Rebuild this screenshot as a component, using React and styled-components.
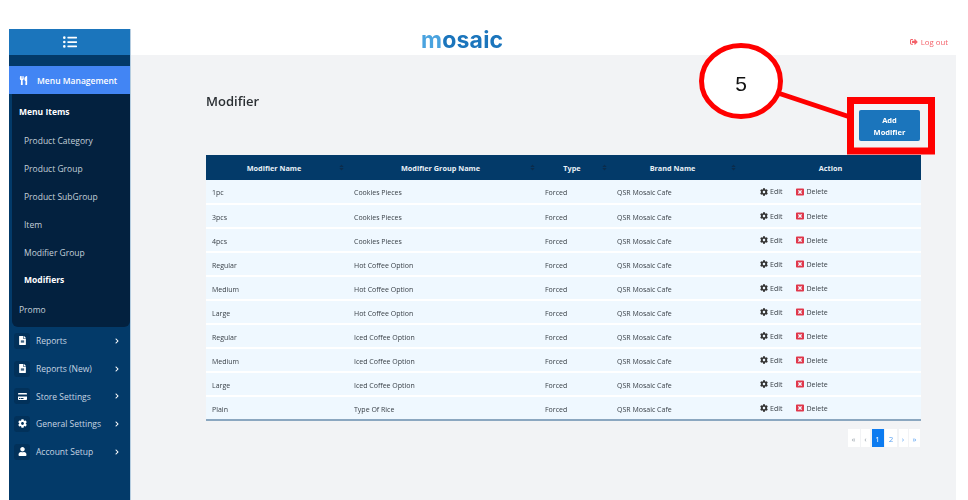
import styled, { createGlobalStyle } from "styled-components";
import {
  FaListUl, FaUtensils, FaFileAlt, FaCreditCard, FaCog, FaUser,
  FaChevronRight, FaSignOutAlt, FaSort, FaWindowClose,
} from "react-icons/fa";

const GlobalStyle = createGlobalStyle`
  html, body { margin: 0; background: #fff; }
  body { font-family: "Open Sans", "Noto Sans", sans-serif; }
`;

const Shell = styled.div`
  position: relative;
  display: flex;
  height: 500px;
  width: 968px;
  padding: 29px 12px 0 9px;
  box-sizing: border-box;
  overflow: hidden;
  filter: blur(0.5px);
`;

const Sidebar = styled.aside`
  width: 122px;
  flex: none;
  background: #033a69;
  border-right: 1px solid #b6cde0;
  box-sizing: border-box;
  color: #fff;
`;

const Toggle = styled.div`
  height: 26px;
  background: #1b75bc;
  display: flex;
  align-items: center;
  justify-content: center;
  font-size: 14px;
`;

const ActiveItem = styled.div`
  margin-top: 11px;
  height: 28px;
  background: #4285f4;
  display: flex;
  align-items: center;
  gap: 9px;
  padding-left: 10px;
  font-size: 8.5px;
  font-weight: 600;
  svg { font-size: 9px; }
`;

const SubMenu = styled.div`
  background: #03213f;
  margin-left: 3px;
  border-radius: 0 0 6px 6px;
  padding-top: 1px;
  height: 233px;
  box-sizing: border-box;
`;

const SubItem = styled.div`
  height: ${(p) => p.$h || 27.8}px;
  display: flex;
  align-items: center;
  padding-left: ${(p) => (p.$top ? 7 : 12)}px;
  font-size: 8.5px;
  font-weight: ${(p) => (p.$bold ? 700 : 400)};
  color: ${(p) => (p.$bold ? "#fff" : "#c3d0da")};
`;

const NavItem = styled.div`
  height: 27.7px;
  display: flex;
  align-items: center;
  padding-left: 5px;
  font-size: 8.5px;
  color: #c6d5e2;
`;

const NavIcon = styled.span`
  width: 16px;
  height: 16px;
  background: #02315a;
  border-radius: 3px;
  display: flex;
  align-items: center;
  justify-content: center;
  color: #fff;
  font-size: 9px;
  margin-right: 6px;
`;

const NavLabel = styled.span`
  width: 78px;
  white-space: nowrap;
`;

const Chevron = styled(FaChevronRight)`
  font-size: 6px;
  color: #fff;
`;

const Main = styled.main`
  flex: 1;
  display: flex;
  flex-direction: column;
  min-width: 0;
`;

const Header = styled.header`
  height: 26px;
  flex: none;
  background: #fff;
  display: flex;
  align-items: center;
  justify-content: space-between;
  padding: 0 8px 0 290px;
`;

const Logo = styled.div`
  font-family: "Inter", "Liberation Sans", sans-serif;
  font-weight: 700;
  font-size: 23px;
  letter-spacing: 0.2px;
  line-height: 26px;
  margin-top: -4px;
  color: #1b75bc;
  span { color: #4aa3df; }
`;

const Logout = styled.a`
  display: flex;
  align-items: center;
  gap: 3px;
  font-size: 7.8px;
  color: #f4626a;
`;

const Content = styled.section`
  flex: 1;
  background: #f2f3f5;
  padding: 0 35px 0 75px;
`;

const TitleRow = styled.div`
  display: flex;
  justify-content: space-between;
  align-items: flex-start;
  height: 100px;
`;

const Title = styled.h1`
  margin: 36px 0 0;
  font-size: 13px;
  line-height: 20px;
  font-weight: 600;
  color: #2b2f33;
`;

const AddButton = styled.button`
  margin: 55px 1px 0 0;
  width: 61px;
  height: 31px;
  border: 0;
  border-radius: 2px;
  background: #1b75bc;
  color: #fff;
  font-family: inherit;
  font-size: 7.5px;
  font-weight: 700;
  line-height: 12px;
  padding: 0 12px;
`;

const Table = styled.table`
  width: 715px;
  table-layout: fixed;
  border-collapse: collapse;
  font-size: 7px;
`;

const HeadCell = styled.th`
  position: relative;
  box-sizing: border-box;
  width: ${(p) => p.$w}px;
  height: 25px;
  padding: 0 ${(p) => (p.$sortable ? 12 : 6)}px 0 6px;
  background: #033a69;
  color: #e9f0f6;
  font-size: 7.3px;
  font-weight: 700;
  text-align: center;
  svg {
    position: absolute;
    right: 3px;
    top: 9px;
    font-size: 7px;
    color: #0b2c4c;
  }
`;

const Row = styled.tr`
  height: 24px;
  background: #eff8ff;
  border-bottom: 2px solid #fff;
  &:last-child { border-bottom-color: #8ba7c0; }
`;

const Cell = styled.td`
  padding: 2px 6px 0;
  color: #3a4148;
  white-space: nowrap;
`;

const ActionCell = styled(Cell)`
  padding-left: 20px;
`;

const ActionLink = styled.span`
  display: inline-flex;
  align-items: center;
  gap: 2px;
  margin-right: 14px;
  svg { font-size: 8px; color: ${(p) => p.$color}; }
`;

const Pager = styled.div`
  display: flex;
  justify-content: flex-end;
  gap: 1.5px;
  margin: 8px 1px 0 0;
`;

const PageBtn = styled.span`
  width: ${(p) => p.$w}px;
  height: 18px;
  display: flex;
  align-items: center;
  justify-content: center;
  font-size: 8px;
  background: ${(p) => (p.$active ? "#0d7bf0" : "#fff")};
  color: ${(p) => (p.$active ? "#fff" : p.$off ? "#9aa3ab" : "#5aa2f2")};
`;

const Callout = styled.svg`
  position: absolute;
  left: 0;
  top: 0;
  pointer-events: none;
`;

const rows = [
  ["1pc", "Cookies Pieces"],
  ["3pcs", "Cookies Pieces"],
  ["4pcs", "Cookies Pieces"],
  ["Regular", "Hot Coffee Option"],
  ["Medium", "Hot Coffee Option"],
  ["Large", "Hot Coffee Option"],
  ["Regular", "Iced Coffee Option"],
  ["Medium", "Iced Coffee Option"],
  ["Large", "Iced Coffee Option"],
  ["Plain", "Type Of Rice"],
];

const subItems = ["Product Category", "Product Group", "Product SubGroup", "Item", "Modifier Group"];

const navItems = [
  [FaFileAlt, "Reports"],
  [FaFileAlt, "Reports (New)"],
  [FaCreditCard, "Store Settings"],
  [FaCog, "General Settings"],
  [FaUser, "Account Setup"],
];

const columns = [
  ["Modifier Name", 142],
  ["Modifier Group Name", 191],
  ["Type", 72],
  ["Brand Name", 129],
];

export default function App() {
  return (
    <Shell>
      <GlobalStyle />
      <Sidebar>
        <Toggle><FaListUl /></Toggle>
        <ActiveItem><FaUtensils /> Menu Management</ActiveItem>
        <SubMenu>
          <SubItem $top $bold $h={32}>Menu Items</SubItem>
          {subItems.map((s) => (
            <SubItem key={s}>{s}</SubItem>
          ))}
          <SubItem $bold>Modifiers</SubItem>
          <SubItem $top $h={32}>Promo</SubItem>
        </SubMenu>
        <nav>
          {navItems.map(([Icon, label]) => (
            <NavItem key={label}>
              <NavIcon><Icon /></NavIcon>
              <NavLabel>{label}</NavLabel>
              <Chevron />
            </NavItem>
          ))}
        </nav>
      </Sidebar>
      <Main>
        <Header>
          <Logo><span>m</span>osaic</Logo>
          <Logout><FaSignOutAlt /> Log out</Logout>
        </Header>
        <Content>
          <TitleRow>
            <Title>Modifier</Title>
            <AddButton>Add Modifier</AddButton>
          </TitleRow>
          <Table>
            <thead>
              <tr>
                {columns.map(([name, w]) => (
                  <HeadCell key={name} $w={w} $sortable>{name}<FaSort /></HeadCell>
                ))}
                <HeadCell $w={181}>Action</HeadCell>
              </tr>
            </thead>
            <tbody>
              {rows.map(([name, group], i) => (
                <Row key={i}>
                  <Cell>{name}</Cell>
                  <Cell>{group}</Cell>
                  <Cell>Forced</Cell>
                  <Cell>QSR Mosaic Cafe</Cell>
                  <ActionCell>
                    <ActionLink $color="#333"><FaCog /> Edit</ActionLink>
                    <ActionLink $color="#e0384c"><FaWindowClose /> Delete</ActionLink>
                  </ActionCell>
                </Row>
              ))}
            </tbody>
          </Table>
          <Pager>
            <PageBtn $off $w={12}>«</PageBtn>
            <PageBtn $off $w={9}>‹</PageBtn>
            <PageBtn $active $w={12}>1</PageBtn>
            <PageBtn $w={12}>2</PageBtn>
            <PageBtn $w={9}>›</PageBtn>
            <PageBtn $w={11}>»</PageBtn>
          </Pager>
        </Content>
      </Main>
      <Callout width="968" height="500" viewBox="0 0 968 500">
        <line x1="778" y1="93" x2="850" y2="117" stroke="#f00" strokeWidth="5" />
        <ellipse cx="741" cy="81" rx="39.5" ry="35.5" fill="#fff" stroke="#f00" strokeWidth="5" />
        <text x="741" y="90.5" textAnchor="middle" fontFamily="Liberation Sans, sans-serif" fontSize="21" fill="#111">5</text>
        <rect x="850.5" y="100.5" width="81" height="50.5" fill="none" stroke="#f00" strokeWidth="7" />
      </Callout>
    </Shell>
  );
}
